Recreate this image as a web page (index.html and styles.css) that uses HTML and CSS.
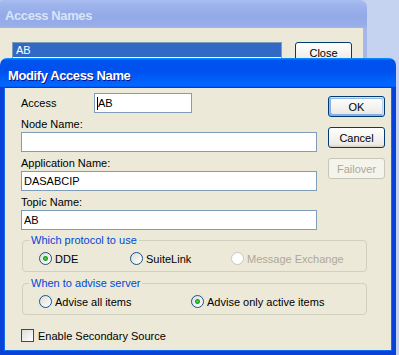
FILE: index.html
```html
<!DOCTYPE html>
<html lang="en">
<head>
  <meta charset="UTF-8" />
  <title>Modify Access Name</title>
  <link rel="stylesheet" href="styles.css">
</head>
<body>

  <div class="window back">
    <div class="titlebar inactive">Access Names</div>
    <div class="client back-client">
      <ul class="listbox">
        <li class="selected">AB</li>
      </ul>
      <button class="xp-btn close-btn">Close</button>
    </div>
  </div>

  <div class="window front">
    <div class="titlebar">Modify Access Name</div>
    <div class="client">
      <div class="top">
        <div class="fields">
          <div class="access-row">
            <label for="access">Access</label>
            <div class="edit short"><span class="caret"></span>AB</div>
          </div>
          <label for="node">Node Name:</label>
          <input type="text" id="node" value="" />
          <label for="app">Application Name:</label>
          <input type="text" id="app" value="DASABCIP" />
          <label for="topic">Topic Name:</label>
          <input type="text" id="topic" value="AB" />
        </div>
        <div class="buttons">
          <button class="xp-btn default">OK</button>
          <button class="xp-btn">Cancel</button>
          <button class="xp-btn" disabled>Failover</button>
        </div>
      </div>

      <fieldset class="group">
        <legend>Which protocol to use</legend>
        <div class="options protocol">
          <label><input type="radio" name="proto" checked /> DDE</label>
          <label><input type="radio" name="proto" /> SuiteLink</label>
          <label class="disabled"><input type="radio" name="proto" disabled /> Message Exchange</label>
        </div>
      </fieldset>

      <fieldset class="group">
        <legend>When to advise server</legend>
        <div class="options advise">
          <label><input type="radio" name="advise" /> Advise all items</label>
          <label><input type="radio" name="advise" checked /> Advise only active items</label>
        </div>
      </fieldset>

      <label class="check"><input type="checkbox" /> Enable Secondary Source</label>
    </div>
  </div>

</body>
</html>
```

FILE: styles.css
```css
body {
  margin: 0;
  width: 399px;
  height: 355px;
  overflow: hidden;
  position: relative;
  background-color: #c6d3f0;
  font-family: 'Liberation Sans', Arial, sans-serif;
  font-size: 11px;
  color: #000;
}

/* windows on the desktop */
.window {
  position: absolute;
}

.window.back {
  left: -4px;
  top: 0;
  width: 371px;
  height: 110px;
}

.window.front {
  left: 0;
  top: 58px;
  width: 396px;
  height: 297px;
}

.titlebar {
  height: 30px;
  box-sizing: border-box;
  padding: 10px 0 0 8px;
  border-radius: 7px 7px 0 0;
  background: linear-gradient(180deg, #0997ff, #0053ee 8%, #0050ee 40%, #0066ff 88%, #0066ff 93%, #005bff 95%, #003dd7 96%, #003dd7);
  color: #fff;
  font-size: 13px;
  font-weight: bold;
  letter-spacing: -0.4px;
  text-shadow: 1px 1px #0f1089;
}

.titlebar.inactive {
  height: 28px;
  padding: 8px 0 0 9px;
  background: linear-gradient(180deg, #a9bdf0, #9cb3ec 20%, #93aae8 60%, #97aee9 90%, #a3b5ea);
  color: #d8e4f8;
  text-shadow: none;
}

.client {
  background-color: #ece9d8;
  border: 4px solid #0842d8;
  border-top: none;
  height: 267px;
  box-sizing: border-box;
  padding: 5px 0 0 17px;
  box-shadow: inset 1px 0 #166aee, inset -1px 0 #166aee, inset 0 -1px #166aee;
}

.back-client {
  border-color: #a8b6e8;
  box-shadow: none;
  height: 82px;
  padding: 14px 0 0 12px;
  display: flex;
  align-items: flex-start;
}

.listbox {
  list-style: none;
  margin: 0;
  padding: 0;
  width: 270px;
  height: 16px;
  overflow: hidden;
  box-sizing: border-box;
  border: 1px solid #7f9db9;
  border-bottom: none;
  background: #fff;
}

.listbox li {
  height: 14px;
  line-height: 14px;
  padding-left: 3px;
}

.listbox li.selected {
  background-color: #316ac5;
  color: #fff;
}

.close-btn {
  margin-left: 13px;
}

/* top part: fields + buttons */
.top {
  display: flex;
}

.fields {
  width: 296px;
  display: flex;
  flex-direction: column;
}

.fields label {
  display: block;
  height: 16px;
  line-height: 16px;
  margin-top: 3px;
}

.access-row {
  display: flex;
  align-items: center;
}

.access-row label {
  width: 73px;
  margin-top: 0;
}

input[type="text"], .edit {
  height: 20px;
  box-sizing: border-box;
  width: 296px;
  margin: 0;
  border: 1px solid #7f9db9;
  padding: 0 2px;
  font-family: inherit;
  font-size: 11px;
  background: #fff;
  outline: none;
}

.edit {
  display: flex;
  align-items: center;
}

.edit.short {
  width: 98px;
}

.caret {
  width: 1px;
  height: 13px;
  background: #000;
}

.buttons {
  margin-left: 11px;
  padding-top: 3px;
  display: flex;
  flex-direction: column;
  gap: 10px;
}

.xp-btn {
  width: 57px;
  height: 21px;
  padding: 0;
  border: 1px solid #003c74;
  border-radius: 3px;
  background: linear-gradient(180deg, #fff, #ecebe6 86%, #d6d0c5);
  font-family: inherit;
  font-size: 11px;
  color: #000;
}

.xp-btn.default {
  box-shadow: inset -1px 1px #cee7ff, inset 1px 2px #98b8ea, inset -2px 2px #bcd4f6, inset 1px -1px #89ade4, inset 2px -2px #89ade4;
}

.xp-btn:disabled {
  border-color: #c9c7ba;
  background: #f5f4ea;
  color: #aca899;
}

/* group boxes */
.group {
  width: 345px;
  box-sizing: border-box;
  margin: 4px 0 0 1px;
  padding: 5px 6px 6px 6px;
  border: 1px solid #d0d0bf;
  border-radius: 4px;
  min-inline-size: 0;
}

.group + .group {
  margin-top: 5px;
}

.group legend {
  padding: 0 2px;
  line-height: 13px;
  color: #0046d5;
}

.options {
  display: grid;
  margin-left: 10px;
  height: 13px;
  align-items: center;
}

.protocol {
  grid-template-columns: 91px 101px auto;
}

.advise {
  grid-template-columns: 152px auto;
}

.options label, .check {
  display: flex;
  align-items: center;
  gap: 3px;
  white-space: nowrap;
}

.options label.disabled {
  color: #aca899;
}

input[type="radio"], input[type="checkbox"] {
  appearance: none;
  -webkit-appearance: none;
  margin: 0;
  width: 13px;
  height: 13px;
  box-sizing: border-box;
  border: 1px solid #1c5180;
  background: linear-gradient(135deg, #dcdcd7, #fff);
}

input[type="radio"] {
  border-radius: 50%;
}

input[type="radio"]:checked {
  background: radial-gradient(circle, #55d651 0, #21a121 2px, rgba(33, 161, 33, 0) 3px), linear-gradient(135deg, #dcdcd7, #fff);
}

input[type="radio"]:disabled {
  border-color: #cac8bb;
  background: #fff;
}

.check {
  margin-top: 14px;
  gap: 4px;
}
```
